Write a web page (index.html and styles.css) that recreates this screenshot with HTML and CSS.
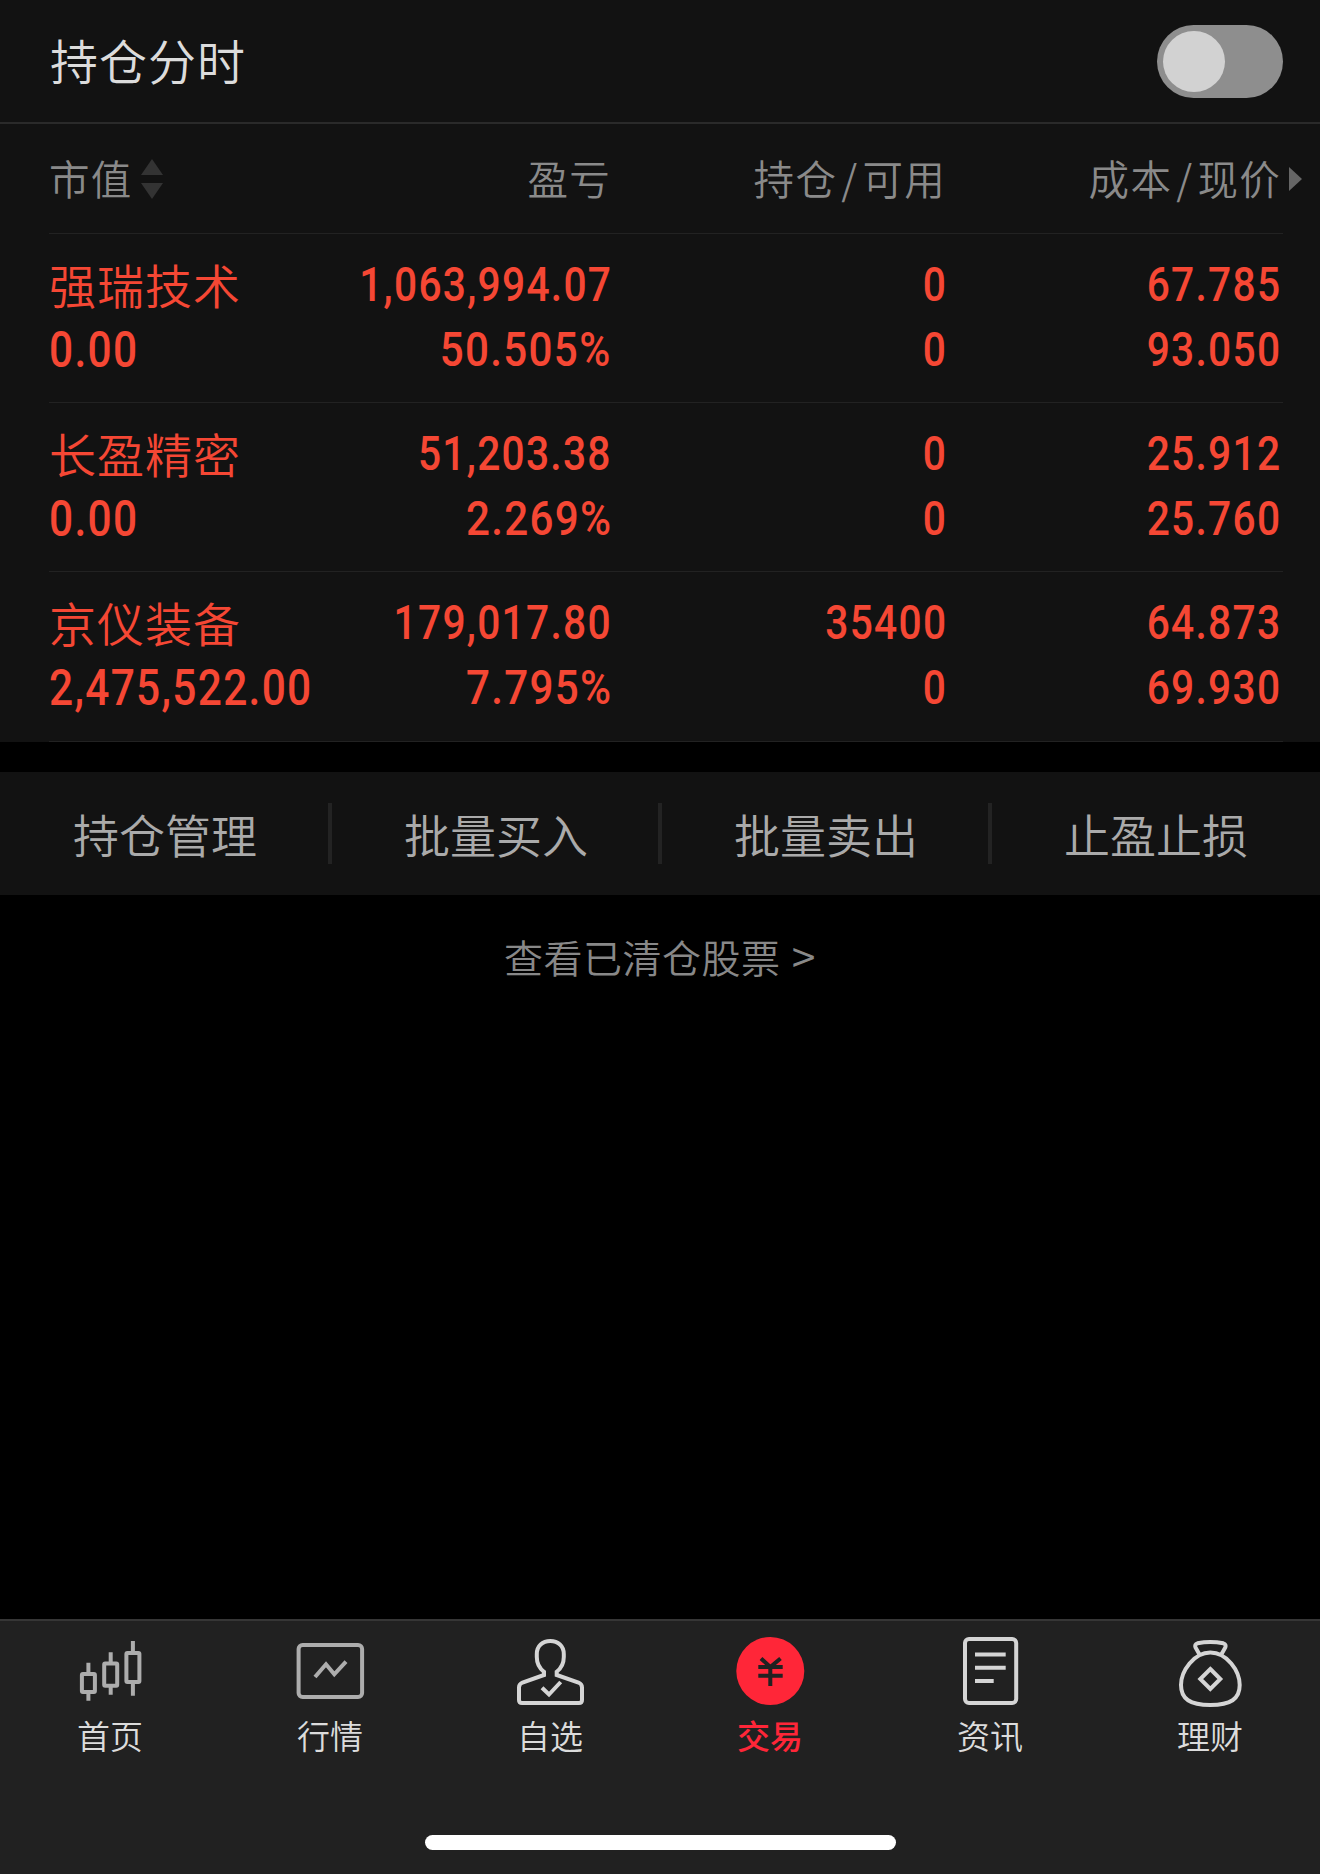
FILE: index.html
```html
<!DOCTYPE html>
<html lang="zh-CN">
<head>
    <meta charset="UTF-8">
    <meta name="viewport" content="width=device-width, initial-scale=1.0">
    <title>持仓</title>
    <link rel="stylesheet" href="styles.css">
</head>
<body>
    <header class="topo">
        <h1>持仓分时</h1>
        <div class="switch"><div class="switch_knob"></div></div>
    </header>

    <main>
        <section class="tabela">
            <div class="linha linha-titulo">
                <div class="titulo titulo-sort">市值
                    <svg class="sort" viewBox="0 0 22 40"><path d="M11 0L22 16H0Z"/><path d="M0 24H22L11 40Z"/></svg>
                </div>
                <div class="titulo">盈亏</div>
                <div class="titulo">持仓<i>/</i>可用</div>
                <div class="titulo">成本<i>/</i>现价<svg class="mais" viewBox="0 0 13 24"><path d="M0 0L13 12L0 24Z"/></svg></div>
            </div>
            <div class="linha">
                <div class="celula"><b>强瑞技术</b><span>0.00</span></div>
                <div class="celula"><span>1,063,994.07</span><span class="porcento">50.505%</span></div>
                <div class="celula"><span>0</span><span>0</span></div>
                <div class="celula"><span>67.785</span><span>93.050</span></div>
            </div>
            <div class="linha">
                <div class="celula"><b>长盈精密</b><span>0.00</span></div>
                <div class="celula"><span>51,203.38</span><span class="porcento">2.269%</span></div>
                <div class="celula"><span>0</span><span>0</span></div>
                <div class="celula"><span>25.912</span><span>25.760</span></div>
            </div>
            <div class="linha linha-ultima">
                <div class="celula"><b>京仪装备</b><span>2,475,522.00</span></div>
                <div class="celula"><span>179,017.80</span><span class="porcento">7.795%</span></div>
                <div class="celula"><span>35400</span><span>0</span></div>
                <div class="celula"><span>64.873</span><span>69.930</span></div>
            </div>
        </section>

        <section class="acoes">
            <div class="acao">持仓管理</div>
            <div class="acao">批量买入</div>
            <div class="acao">批量卖出</div>
            <div class="acao">止盈止损</div>
        </section>

        <div class="link">查看已清仓股票 <span>&gt;</span></div>
    </main>

    <footer>
        <nav class="menu">
            <div class="menu_item menu_item-cinza">
                <svg viewBox="0 0 68 68">
                    <rect x="5.9" y="36.9" width="13" height="18" rx="1"/>
                    <rect x="28.2" y="26.6" width="13" height="22.2" rx="1"/>
                    <rect x="50.4" y="15.9" width="13" height="29" rx="1"/>
                    <path d="M12.4 25.7V36M12.4 56V63.7M34.7 15.3V26M34.7 50V57.7M56.9 4V15M56.9 46V58.7"/>
                </svg>
                首页
            </div>
            <div class="menu_item menu_item-cinza">
                <svg viewBox="0 0 68 68">
                    <rect x="2.6" y="8" width="63.5" height="52" rx="4"/>
                    <path d="M19 40L30 27.3L38.3 37.3L50 24.7"/>
                </svg>
                行情
            </div>
            <div class="menu_item">
                <svg viewBox="0 0 68 68">
                    <path d="M28 38V34.8C23 31 20.800 26 20.800 20V17C20.800 9 26.500 4 34.300 4S47.800 9 47.800 17V20C47.800 26 45.500 31 40.700 34.800V38L62.500 45.500Q66 47 66 50.500V63Q66 66 63 66H6Q3 66 3 63V50.500Q3 47 6.500 45.500Z"/>
                    <path d="M26 50.7L33 57.5L44.7 45"/>
                </svg>
                自选
            </div>
            <div class="menu_item menu_item-ativo">
                <svg viewBox="0 0 68 68">
                    <circle cx="34.3" cy="34" r="34"/>
                    <path d="M25 21.5L34.3 30L44.5 21.5M22.3 30H46.7M22.3 38.7H46.7M34.3 29V49"/>
                </svg>
                交易
            </div>
            <div class="menu_item">
                <svg viewBox="0 0 68 68">
                    <rect x="9" y="2" width="51.2" height="64" rx="4"/>
                    <path d="M19 17.5H49.7M19 30.8H49.7M19 44H37.7"/>
                </svg>
                资讯
            </div>
            <div class="menu_item">
                <svg viewBox="0 0 68 68">
                    <path d="M34.3 15.5C18 15.5 5 34 5 48C5 62 14 68 34.3 68S63.7 62 63.7 48C63.7 34 51 15.5 34.3 15.5Z"/>
                    <path d="M23.5 17.5L19.5 10.5Q18.3 7.3 21.5 6.3Q34.3 3.7 47.3 6.3Q50.5 7.3 49.3 10.5L45.3 17.5"/>
                    <path d="M34.3 32L44.3 42L34.3 52L24.3 42Z"/>
                </svg>
                理财
            </div>
        </nav>
        <div class="barra"></div>
    </footer>
</body>
</html>
```
FILE: styles.css
```css
*{border: 0;margin: 0;padding: 0;box-sizing: border-box;}
body{
    display: flex;
    flex-direction: column;
    height: 1874px;
    overflow: hidden;
    background-color: #000;
    font-family: 'Noto Sans CJK SC', sans-serif;
    font-weight: 350;
}
.topo{
    display: flex;
    align-items: center;
    justify-content: space-between;
    height: 124px;
    padding: 0 37px 0 50px;
    background-color: #121212;
    border-bottom: 2px solid #2a2a2a;
}
h1{
    padding-bottom: 4px;
    font-size: 48px;
    font-weight: 350;
    letter-spacing: 1px;
    color: #dcdcdc;
}
.switch{
    width: 126px;
    height: 73px;
    padding: 6px;
    border-radius: 37px;
    background-color: #8e8e8e;
}
.switch_knob{
    width: 62px;
    height: 61px;
    border-radius: 50%;
    background-color: #d2d2d2;
}
main{
    flex: 1;
}
.tabela{
    padding: 0 37px 0 49px;
    background-color: #121212;
}
.linha{
    display: grid;
    grid-template-columns: 261px 301px 335px 334px;
    height: 169px;
    padding-top: 24px;
    border-bottom: 1px solid #222;
}
.linha-titulo{
    height: 110px;
    padding: 0 0 2px;
    align-items: center;
}
.linha-ultima{
    height: 170px;
}
.titulo{
    display: flex;
    justify-content: flex-end;
    align-items: center;
    font-size: 40.5px;
    letter-spacing: 1.3px;
    color: #8a8a8a;
    white-space: nowrap;
}
.titulo i{
    margin: 0 4px;
    font-style: normal;
}
.titulo-sort{
    justify-content: flex-start;
    gap: 8px;
}
.sort{
    width: 22px;
    height: 40px;
    margin-top: 2px;
    fill: #333;
}
.mais{
    width: 13px;
    height: 24px;
    margin: 2px -22px 0 8px;
    fill: #666;
}
.celula{
    display: flex;
    flex-direction: column;
    align-items: flex-end;
    color: #f54734;
}
.celula:first-child{
    align-items: flex-start;
}
.celula b{
    height: 65px;
    font-size: 47px;
    font-weight: 350;
    line-height: 52px;
    letter-spacing: 1px;
}
/* condensed figures */
.celula span{
    height: 65px;
    margin-right: -1px;
    font-family: Roboto, sans-serif;
    font-size: 48.5px;
    font-weight: 500;
    line-height: 54px;
    letter-spacing: 1.5px;
    transform: scaleX(.84);
    transform-origin: right;
}
.celula .porcento{
    transform: scaleX(.87);
}
.celula:first-child span{
    font-size: 50px;
    transform: scaleX(.85);
    transform-origin: left;
}
.acoes{
    display: flex;
    height: 123px;
    margin-top: 30px;
    padding: 31px 0;
    background-color: #121212;
}
.acao{
    width: 330px;
    text-align: center;
    font-size: 46px;
    line-height: 60px;
    color: #aaa;
}
.acao + .acao{
    width: 332px;
    margin-left: -2px;
    border-left: 4px solid #232323;
}
.link{
    margin-top: 31px;
    text-align: center;
    font-size: 39px;
    line-height: 56px;
    letter-spacing: .5px;
    color: #888;
}
.link span{
    margin-left: 2px;
    font-size: 43px;
}
footer{
    height: 255px;
    background-color: #212121;
    border-top: 2px solid #363636;
}
.menu{
    display: flex;
    height: 214px;
    padding-top: 16px;
}
.menu_item{
    display: flex;
    flex: 1;
    flex-direction: column;
    align-items: center;
    font-size: 33px;
    line-height: 60px;
    color: #dcdcdc;
}
.menu_item svg{
    width: 68px;
    height: 68px;
    overflow: visible;
    fill: none;
    stroke: #d5d5d5;
    stroke-width: 4;
}
.menu_item-cinza svg{
    stroke: #adadad;
}
.menu_item-ativo{
    color: #ff2638;
    font-weight: 500;
}
.menu_item-ativo circle{
    fill: #ff2638;
    stroke: none;
}
.menu_item-ativo path{
    stroke: #212121;
}
.barra{
    width: 471px;
    height: 15px;
    margin: 0 auto;
    border-radius: 8px;
    background-color: #fff;
}
```
